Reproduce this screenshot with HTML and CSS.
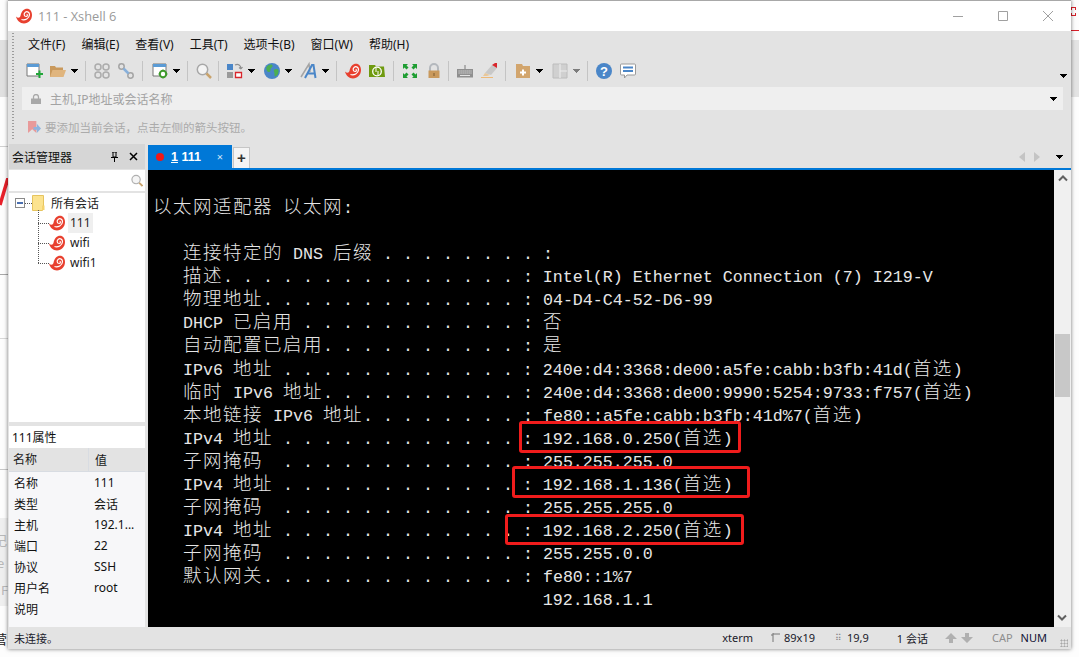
FILE: index.html
```html
<!DOCTYPE html>
<html lang="zh">
<head>
<meta charset="utf-8">
<title>111 - Xshell 6</title>
<link rel="stylesheet" href="styles.css">
</head>
<body>
<svg class="defs" width="0" height="0">
  <symbol id="snail" viewBox="0 0 16 16">
    <path d="M0 8.500C2 10.500 4 10 4.600 7.500 5.400 3.500 8 .8 11 .8 14 .8 16 3.400 16 7c0 5-3.600 8.400-8 8.400-4 0-7-2.800-8-6.900Z" fill="#e8402f"/>
    <path d="M5.500 11.500C9 12.500 13.300 10.500 13.500 6.800 13.600 4.300 11.200 3 9.300 4.200 7.400 5.500 8 8.500 10.200 8.500 11.500 8.400 11.800 6.800 10.700 6.300" fill="none" stroke="#fff" stroke-width="1.200"/>
  </symbol>
  <symbol id="caret" viewBox="0 0 7 16">
    <path d="M0 6h7v1H6v1H5v1H4v1H3V9H2V8H1V7H0Z" fill="#000"/>
  </symbol>
</svg>

<div class="desk">
  <i class="bg bg-band-l"></i><i class="bg bg-l2"></i><i class="bg bg-l3"></i><i class="bg bg-l4"></i><i class="bg bg-l5"></i>
  <i class="bg bg-band-b"></i><i class="bg bg-band-r"></i><i class="bg bg-r1"></i><i class="bg bg-r2"></i>
  <svg class="bg bg-slash" viewBox="0 0 8 32"><path d="M8 0 0 27" stroke="#e8202a" stroke-width="3.500" fill="none"/></svg>
  <span class="bg bg-t1">记</span><span class="bg bg-t2">e</span><span class="bg bg-t3">F</span><span class="bg bg-t4">营</span>

  <div class="win">
    <header class="title">
      <svg class="logo"><use href="#snail"/></svg>
      <span class="title-text">111 - Xshell 6</span>
      <span class="winbtns">
        <svg class="wb" viewBox="0 0 12 12"><path d="M1 6.500h10" stroke="#a0a0a0"/></svg>
        <svg class="wb" viewBox="0 0 12 12"><path d="M1.500 1.500h9v9h-9Z" stroke="#a0a0a0" fill="none"/></svg>
        <svg class="wb" viewBox="0 0 12 12"><path d="M1 1l10 10M11 1 1 11" stroke="#a0a0a0" fill="none"/></svg>
      </span>
    </header>

    <div class="chrome">
      <i class="grip"></i>
      <nav class="menu">
        <span>文件(F)</span><span>编辑(E)</span><span>查看(V)</span><span>工具(T)</span><span>选项卡(B)</span><span>窗口(W)</span><span>帮助(H)</span>
      </nav>
      <div class="tools">
        <svg class="ico" viewBox="0 0 16 16"><path d="M1 1h12v12H1Z" fill="#fff" stroke="#777"/><path d="M1 1h12v3H1Z" fill="#5b9bd5"/><path d="M10 10h2.500V7.500h2V10H17v2h-2.500v3h-2v-3H10Z" fill="#22a63a"/></svg>
        <svg class="ico" viewBox="0 0 16 16"><path d="M0 3h5l1 1.500h7V14H0Z" fill="#c9995c"/><path d="M2.500 7H16l-2.500 7H0Z" fill="#e0b57e"/></svg>
        <svg class="car"><use href="#caret"/></svg>
        <i class="sep"></i>
        <svg class="ico dim" viewBox="0 0 16 16"><g fill="none" stroke="#9a9a9a" stroke-width="1.500"><circle cx="4" cy="4" r="3"/><circle cx="12" cy="12" r="3"/><circle cx="12" cy="4" r="3"/><circle cx="4" cy="12" r="3"/></g></svg>
        <svg class="ico dim" viewBox="0 0 16 16"><circle cx="3.500" cy="3.500" r="2.700" fill="none" stroke="#909090" stroke-width="1.500"/><circle cx="12.500" cy="12.500" r="2.700" fill="none" stroke="#909090" stroke-width="1.500"/><path d="M5.500 5.500l5 5" stroke="#6a9fd8" stroke-width="2.500"/></svg>
        <i class="sep"></i>
        <svg class="ico m1" viewBox="0 0 16 16"><path d="M1 1h13v12H1Z" fill="#fff" stroke="#777"/><path d="M1 1h13v3H1Z" fill="#5b9bd5"/><circle cx="11" cy="11" r="3.200" fill="#fff" stroke="#3f9a2c" stroke-width="2"/><path d="M11 6.500v9M6.500 11h9" stroke="#3f9a2c" stroke-width="1" stroke-dasharray="1.500 6"/></svg>
        <svg class="car"><use href="#caret"/></svg>
        <i class="sep"></i>
        <svg class="ico" viewBox="0 0 16 16"><circle cx="6.500" cy="6.500" r="5.200" fill="#f4f4f4" stroke="#a8a8a8" stroke-width="1.500"/><path d="M10.500 10.500 15 15" stroke="#c9a36c" stroke-width="2.500"/></svg>
        <i class="sep tight"></i>
        <svg class="ico" viewBox="0 0 16 16"><path d="M0 1h6v6H0Z" fill="#4a86c8"/><path d="M0 9h6v6H0Z" fill="#9a9a9a"/><path d="M8.500 9.500h6v5h-6Z" fill="#fff" stroke="#d8262c" stroke-width="1.300"/><path d="M8 2c3-1.500 6 0 6 4M14 6l-2-1.500M14 6l1.500-2" fill="none" stroke="#909090" stroke-width="1.200"/></svg>
        <svg class="car wide"><use href="#caret"/></svg>
        <svg class="ico" viewBox="0 0 16 16"><circle cx="8" cy="8" r="8" fill="#4a86c8"/><path d="M2.500 4C5 1 8 1 8.500 2.500 9 4.500 6.500 4.500 6.500 6.500 7 8.500 5 10 3.500 8.500 2.500 7 2 5.500 2.500 4ZM10.500 6.500c2-1 4-.5 4 1.500.3 2.500-1.500 5-3 5.500-1.500-.5-1-2.500-1-3.500-.5-1.500-1.300-2.500 0-3.500Z" fill="#4caf50"/></svg>
        <svg class="car wide"><use href="#caret"/></svg>
        <span class="ico-a"><svg class="ico" viewBox="0 0 16 16"><path d="M0 14 8 1l1 8" fill="none" stroke="#a4a4a4" stroke-width="1.500"/><path d="M4 15 11 2h1.500l2 13M7 10.500h7" fill="none" stroke="#4a86c8" stroke-width="2"/></svg></span>
        <svg class="car"><use href="#caret"/></svg>
        <i class="sep"></i>
        <svg class="ico"><use href="#snail"/></svg>
        <svg class="ico" viewBox="0 0 16 16"><path d="M0 2h6l1 1.500h8L16 14H0Z" fill="#6f9a10"/><circle cx="8" cy="8.500" r="4.300" fill="none" stroke="#fff" stroke-width="1.300"/><path d="M7 5v7M9 5v7" stroke="#6f9a10"/><path d="M7 5v4M9 8v4" stroke="#fff"/></svg>
        <i class="sep"></i>
        <svg class="ico" viewBox="0 0 16 16"><g fill="#1f9e33"><path d="M1 1h5L4.500 2.500 6.500 4.500 4.500 6.500 2.500 4.500 1 6ZM15 1v5l-1.500-1.500-2 2-2-2 2-2L10 1ZM1 15v-5l1.500 1.500 2-2 2 2-2 2L6 15ZM15 15h-5l1.500-1.500-2-2 2-2 2 2L15 10Z"/></g></svg>
        <svg class="ico" viewBox="0 0 16 16"><path d="M4 8V5a4 4 0 0 1 8 0v3" fill="none" stroke="#b4b8bd" stroke-width="2"/><path d="M2.500 7.500h11V15h-11Z" fill="#c9995c"/><path d="M8 10v3" stroke="#96703f" stroke-width="1.500"/></svg>
        <i class="sep tight"></i>
        <svg class="ico" viewBox="0 0 16 16"><path d="M0 6h16v8.500H0Z" fill="#8f8f8f"/><path d="M8 6V2" stroke="#7a7a7a"/><path d="M1.500 8h13M1.500 10h13" stroke="#e3e3e3" stroke-dasharray="1.200 .8"/><path d="M3 12.500h10" stroke="#e3e3e3"/></svg>
        <svg class="ico" viewBox="0 0 16 16"><path d="M4 10 11 2l5 3-6 7Z" fill="#c8c8c8"/><path d="M11 2l3-2h2v5Z" fill="#d8262c"/><path d="M4 10l-2 3h4l3-1Z" fill="#e8c79a"/><path d="M0 14.500h12" stroke="#eeb976"/></svg>
        <i class="sep"></i>
        <svg class="ico m1" viewBox="0 0 16 16"><path d="M1 1h6l1 2h7v12H1Z" fill="#d2a56d"/><path d="M7 8.500h2v-2h2v2h2v2h-2v2H9v-2H7Z" fill="#fff" transform="translate(-2 0)"/></svg>
        <svg class="car"><use href="#caret"/></svg>
        <svg class="ico m2" viewBox="0 0 16 16"><path d="M1 1h14v14H1Z" fill="#d0d0d0" stroke="#bcbcbc"/><path d="M8 1v14M8 8h7" stroke="#ececec" stroke-width="1.200"/></svg>
        <svg class="car faint"><use href="#caret"/></svg>
        <i class="sep"></i>
        <svg class="ico" viewBox="0 0 16 16"><circle cx="8" cy="8" r="8" fill="#4a86c8"/><text x="8" y="12.500" class="qm">?</text></svg>
        <svg class="ico" viewBox="0 0 16 16"><path d="M1.500 1h13a1 1 0 0 1 1 1v9a1 1 0 0 1-1 1H7l-2.500 3v-3h-3a1 1 0 0 1-1-1V2a1 1 0 0 1 1-1Z" fill="#fff" stroke="#9a9a9a"/><path d="M3 4.500h10M3 8h10" stroke="#4a86c8" stroke-width="2"/></svg>
        <svg class="car end"><use href="#caret"/></svg>
      </div>
      <div class="addr">
        <svg class="lock" viewBox="0 0 10 10"><path d="M2.500 5V3a2.500 2.500 0 0 1 5 0v2" fill="none" stroke="#a8a8a8" stroke-width="1.300"/><path d="M0 4.500h10V10H0Z" fill="#a8a8a8"/></svg>
        <span class="addr-text">主机,IP地址或会话名称</span>
        <svg class="car addr-car"><use href="#caret"/></svg>
      </div>
      <div class="hint">
        <svg class="hint-ico" viewBox="0 0 14 14"><path d="M0 0h9v13L4.500 9 0 13Z" fill="#e89a9a"/><path d="M6 6.500h3.500V3L14 8l-4.500 5V9.500H6Z" fill="#8db4de"/></svg>
        <span>要添加当前会话，点击左侧的箭头按钮。</span>
      </div>
    </div>

    <div class="main">
      <aside class="side">
        <div class="side-head">
          <span>会话管理器</span>
          <svg class="pin" viewBox="0 0 9 10"><path d="M2 0h5M3 0v5h3V0M1 5.500h7M4.500 6v4" stroke="#000" fill="none"/></svg>
          <svg class="closex" viewBox="0 0 9 9"><path d="M1 1l7 7M8 1 1 8" stroke="#000" stroke-width="1.500"/></svg>
        </div>
        <div class="search">
          <svg class="search-ico" viewBox="0 0 13 13"><circle cx="5.500" cy="5.500" r="4.500" fill="#f5f5f5" stroke="#b0b0b0" stroke-width="1.300"/><path d="M9 9l3.500 3.500" stroke="#c9a36c" stroke-width="2"/></svg>
        </div>
        <div class="tree">
          <div class="root">
            <span class="minus"></span><i class="dots"></i>
            <svg class="folder" viewBox="0 0 13 16"><path d="M.5.500h11v13l-1 2H.5Z" fill="#fce38f" stroke="#e6c45e"/><path d="M10 10.500h2.500V15H10Z" fill="#f5d36d"/></svg>
            <span class="root-label">所有会话</span>
          </div>
          <div class="node"><i class="link"></i><svg class="node-ico"><use href="#snail"/></svg><span class="node-label sel">111</span></div>
          <div class="node"><i class="link"></i><svg class="node-ico"><use href="#snail"/></svg><span class="node-label">wifi</span></div>
          <div class="node last"><i class="link"></i><svg class="node-ico"><use href="#snail"/></svg><span class="node-label">wifi1</span></div>
        </div>
        <div class="props-title">111属性</div>
        <div class="props-head"><span class="k">名称</span><span class="v">值</span></div>
        <div class="props">
          <div class="row"><span class="k">名称</span><span class="v">111</span></div>
          <div class="row"><span class="k">类型</span><span class="v">会话</span></div>
          <div class="row"><span class="k">主机</span><span class="v">192.1...</span></div>
          <div class="row"><span class="k">端口</span><span class="v">22</span></div>
          <div class="row"><span class="k">协议</span><span class="v">SSH</span></div>
          <div class="row"><span class="k">用户名</span><span class="v">root</span></div>
          <div class="row"><span class="k">说明</span><span class="v"></span></div>
        </div>
      </aside>

      <section class="work">
        <div class="tabs">
          <div class="tab"><i class="dot"></i><span class="tab-label"><u>1</u> 111</span><span class="tab-x">×</span></div>
          <div class="plus">+</div>
          <span class="tab-nav">
            <svg class="nav" viewBox="0 0 6 10"><path d="M6 0v10L0 5Z" fill="#c4c4c4"/></svg>
            <svg class="nav" viewBox="0 0 6 10"><path d="M0 0v10l6-5Z" fill="#c4c4c4"/></svg>
          </span>
          <svg class="car tab-car"><use href="#caret"/></svg>
        </div>
        <div class="term-wrap">
<pre class="term"> 
<span class="zh">以太网适配器</span> <span class="zh">以太网</span>:

   <span class="zh">连接特定的</span> DNS <span class="zh">后缀</span> . . . . . . . . :
   <span class="zh">描述</span>. . . . . . . . . . . . . . . : Intel(R) Ethernet Connection (7) I219-V
   <span class="zh">物理地址</span>. . . . . . . . . . . . . : 04-D4-C4-52-D6-99
   DHCP <span class="zh">已启用</span> . . . . . . . . . . . : <span class="zh">否</span>
   <span class="zh">自动配置已启用</span>. . . . . . . . . . : <span class="zh">是</span>
   IPv6 <span class="zh">地址</span> . . . . . . . . . . . . : 240e:d4:3368:de00:a5fe:cabb:b3fb:41d(<span class="zh">首选</span>)
   <span class="zh">临时</span> IPv6 <span class="zh">地址</span>. . . . . . . . . . : 240e:d4:3368:de00:9990:5254:9733:f757(<span class="zh">首选</span>)
   <span class="zh">本地链接</span> IPv6 <span class="zh">地址</span>. . . . . . . . : fe80::a5fe:cabb:b3fb:41d%7(<span class="zh">首选</span>)
   IPv4 <span class="zh">地址</span> . . . . . . . . . . . . : 192.168.0.250(<span class="zh">首选</span>)
   <span class="zh">子网掩码</span>  . . . . . . . . . . . . : 255.255.255.0
   IPv4 <span class="zh">地址</span> . . . . . . . . . . . . : 192.168.1.136(<span class="zh">首选</span>)
   <span class="zh">子网掩码</span>  . . . . . . . . . . . . : 255.255.255.0
   IPv4 <span class="zh">地址</span> . . . . . . . . . . . . : 192.168.2.250(<span class="zh">首选</span>)
   <span class="zh">子网掩码</span>  . . . . . . . . . . . . : 255.255.0.0
   <span class="zh">默认网关</span>. . . . . . . . . . . . . : fe80::1%7
                                       192.168.1.1</pre>
          <div class="scroll">
            <svg class="sc" viewBox="0 0 10 8"><path d="M1 6.500 5 2.500l4 4" fill="none" stroke="#606060" stroke-width="2"/></svg>
            <i class="thumb"></i>
            <svg class="sc sc-down" viewBox="0 0 10 8"><path d="M1 1.500l4 4 4-4" fill="none" stroke="#606060" stroke-width="2"/></svg>
          </div>
        </div>
      </section>
    </div>

    <footer class="status">
      <span class="st-left">未连接。</span>
      <span class="st-xterm">xterm</span>
      <svg class="st-ico" viewBox="0 0 9 10"><path d="M2 0v9M0 2h2M7 1h2M2 1h5" stroke="#777" fill="none"/></svg>
      <span class="st-size">89x19</span>
      <span class="st-pos-ico">⠿</span>
      <span class="st-pos">19,9</span>
      <span class="st-sess">1 会话</span>
      <svg class="st-arrow st-up" viewBox="0 0 12 10"><path d="M6 0l6 6H8v4H4V6H0Z" fill="#b0b0b0"/></svg>
      <svg class="st-arrow" viewBox="0 0 12 10"><path d="M6 10 0 4h4V0h4v4h4Z" fill="#b0b0b0"/></svg>
      <span class="st-cap">CAP</span>
      <span class="st-num">NUM</span>
      <i class="st-grip"></i>
    </footer>
  </div>

  <i class="mark mark1"></i><i class="mark mark2"></i><i class="mark mark3"></i>
</div>
</body>
</html>
```

FILE: styles.css
```css
* { box-sizing: border-box; }
html, body { margin: 0; padding: 0; background: #fff; }
body { width: 1079px; height: 657px; overflow: hidden; font-family: "Noto Sans", "Noto Sans CJK SC", sans-serif; font-size: 12px; color: #1a1a1a; }
i { display: block; font-style: normal; }
.defs { position: absolute; }
.desk { position: relative; width: 1079px; height: 657px; background: #fdfdfd; overflow: hidden; }

/* desktop behind the window */
.bg { position: absolute; display: block; }
.bg-band-l { left: 0; top: 40px; width: 8px; height: 57px; background: #e0e0e0; }
.bg-l2 { left: 0; top: 146px; width: 8px; height: 1px; background: #d0d0d0; }
.bg-l3 { left: 0; top: 274px; width: 8px; height: 1px; background: #a8a8a8; }
.bg-l4 { left: 0; top: 338px; width: 8px; height: 1px; background: #d8d8d8; }
.bg-l5 { left: 0; top: 469px; width: 8px; height: 1px; background: #c8c8c8; }
.bg-band-b { left: 0; top: 518px; width: 8px; height: 88px; background: #efefef; }
.bg-band-r { left: 1071px; top: 40px; width: 8px; height: 57px; background: #e4e4e4; }
.bg-r1 { left: 1071px; top: 30px; width: 8px; height: 1px; background: #d8202a; }
.bg-r2 { left: 1071px; top: 7px; width: 5px; height: 9px; border: 1px dashed #d8202a; }
.bg-slash { left: 0; top: 178px; width: 8px; height: 32px; }
.bg-t1, .bg-t2, .bg-t3 { left: 0; color: #b8b8b8; font-size: 13px; line-height: 16px; }
.bg-t1 { top: 532px; left: -6px; }
.bg-t2 { top: 555px; left: -3px; }
.bg-t3 { top: 582px; left: 1px; }
.bg-t4 { left: -6px; top: 631px; color: #222; font-size: 13px; line-height: 16px; }

/* window */
.win { position: absolute; left: 8px; top: 0; width: 1063px; height: 649px; background: #e3e3e3; border-top: 1px solid #a8a8a8; display: flex; flex-direction: column; box-shadow: 0 0 4px rgba(0,0,0,.55); }
.title { height: 30px; background: #fff; display: flex; align-items: center; padding-left: 8px; flex: none; padding-bottom: 1px; }
.logo { width: 16px; height: 16px; }
.title-text { margin-left: 6px; font-size: 12.800px; color: #9a9a9a; font-family: "Open Sans", sans-serif; }
.winbtns { margin-left: auto; display: flex; margin-right: 17px; gap: 33px; }
.wb { width: 12px; height: 12px; display: block; }

.chrome { position: relative; flex: none; height: 113px; padding-left: 14px; }
.grip { position: absolute; left: 4px; top: 2px; width: 2px; height: 108px; background: repeating-linear-gradient(to bottom, #9c9c9c 0 1px, #e3e3e3 1px 3px); }
.menu { height: 26px; display: flex; align-items: center; gap: 16px; padding-left: 6px; font-size: 12px; color: #111; }
.tools { height: 30px; display: flex; align-items: center; padding-left: 4px; padding-bottom: 2px; }
.ico { width: 16px; height: 16px; flex: none; margin-right: 8px; display: block; overflow: visible; }
.ico-a { display: block; flex: none; height: 16px; }
.dim { opacity: .75; }
.m1 { margin-left: 1px; }
.m2 { margin-left: 2px; }
.car { width: 7px; height: 16px; flex: none; margin-left: -3px; margin-right: 7px; display: block; }
.wide { margin-right: 9px; }
.faint { opacity: .45; }
.end { margin-left: auto; margin-right: 4px; margin-top: 10px; }
.sep { width: 1px; height: 20px; background: #c4c4c4; margin-right: 8px; flex: none; }
.tight { margin-left: -2px; }
.qm { font-family: "Liberation Sans", sans-serif; font-size: 13px; font-weight: 700; fill: #fff; text-anchor: middle; }
.addr { height: 23px; margin-right: 8px; background: #efefef; display: flex; align-items: center; padding-left: 9px; color: #a3a3a3; width: 1041px; }
.lock { width: 10px; height: 10px; flex: none; }
.addr-text { margin-left: 9px; }
.addr-car { margin-left: auto; margin-right: 6px; }
.hint { height: 34px; display: flex; align-items: center; padding-left: 6px; color: #ababab; font-size: 11.500px; }
.hint-ico { width: 13px; height: 13px; flex: none; margin-right: 4px; }

.main { flex: 1; min-height: 0; display: flex; }
.side { width: 136px; margin-left: 1px; flex: none; background: #e3e3e3; display: flex; flex-direction: column; }
.side-head { height: 25px; flex: none; background: #d6d6d6; display: flex; align-items: center; padding-left: 3px; font-size: 12px; color: #111; }
.pin { width: 9px; height: 10px; margin-left: 38px; }
.closex { width: 9px; height: 9px; margin-left: 10px; }
.search { height: 21px; margin: 1px 0 2px; background: #fff; display: flex; align-items: center; justify-content: flex-end; padding-right: 2px; flex: none; }
.search-ico { width: 12px; height: 13px; }
.tree { height: 229px; flex: none; background: #fff; padding-top: 2px; margin-bottom: 4px; font-size: 12px; color: #222; }
.root { display: flex; align-items: center; height: 16px; padding-left: 6px; margin-bottom: 2px; }
.minus { width: 10px; height: 10px; border: 1px solid #8a8a8a; background: linear-gradient(#4a6fb0, #4a6fb0) center/6px 2px no-repeat #fff; flex: none; }
.dots { width: 7px; height: 1px; border-top: 1px dotted #555; flex: none; }
.folder { width: 13px; height: 16px; flex: none; }
.root-label { margin-left: 6px; }
.node { display: flex; align-items: center; height: 20px; padding-left: 29px; position: relative; }
.link { width: 11px; height: 10px; border-top: 1px dotted #555; margin-top: 10px; flex: none; }
.node::before { content: ""; position: absolute; left: 29px; top: -3px; height: 23px; border-left: 1px dotted #555; }
.node.last::before { height: 13px; }
.node-ico { width: 16px; height: 16px; flex: none; }
.node-label { margin-left: 3px; height: 20px; line-height: 20px; padding: 0 2px; }
.sel { background: #efefef; width: 25px; }
.props-title { height: 22px; flex: none; background: #fff; display: flex; align-items: center; padding-left: 3px; color: #111; }
.props-head { height: 24px; flex: none; background: #e3e3e3; display: flex; align-items: center; border-bottom: 1px solid #d8dce2; }
.props-head .k { width: 80px; padding-left: 4px; border-right: 1px solid #d8dce2; height: 23px; line-height: 23px; }
.props-head .v { padding-left: 6px; }
.props { flex: 1; background: #f7f7f9; }
.row { display: flex; height: 21px; align-items: center; padding-left: 5px; color: #111; }
.row .k { width: 80px; flex: none; }

.work { flex: 1; min-width: 0; margin-left: 3px; display: flex; flex-direction: column; }
.tabs { height: 24px; flex: none; display: flex; align-items: flex-end; }
.tab { width: 84px; height: 23px; background: #0078d7; color: #fff; display: flex; align-items: center; padding-left: 8px; font-weight: 700; font-size: 12px; }
.dot { width: 8px; height: 8px; border-radius: 50%; background: #f01818; flex: none; }
.tab-label { margin-left: 7px; font-family: "Liberation Sans", sans-serif; font-size: 12.500px; }
.tab-x { margin-left: auto; margin-right: 9px; font-weight: 400; font-size: 11px; color: #cfe6f8; }
.plus { width: 17px; height: 21px; margin-left: 1px; background: #f4f4f4; border: 1px solid #c6c6c6; border-bottom: 0; text-align: center; font-weight: 700; font-size: 15px; line-height: 19px; color: #333; font-family: "Liberation Sans", sans-serif; }
.tab-nav { margin-left: auto; display: flex; gap: 9px; align-self: center; margin-top: 1px; }
.nav { width: 6px; height: 10px; display: block; }
.tab-car { margin-left: 16px; margin-right: 8px; align-self: center; margin-top: 2px; }
.term-wrap { flex: 1; min-height: 0; border-top: 2px solid #0078d7; display: flex; }
.term { flex: 1; margin: 0; background: #000; color: #e6e6e6; padding: 4px 0 0 5px; font-family: "Liberation Mono", monospace; font-size: 16.670px; line-height: 23.060px; overflow: hidden; }
.zh { font-family: "Noto Sans CJK SC", sans-serif; font-size: 18.500px; letter-spacing: 1.500px; font-weight: 300; line-height: 0; }
.scroll { width: 17px; flex: none; background: #f0f0f0; position: relative; padding-top: 2px; }
.sc { display: block; width: 10px; height: 8px; margin: 2px auto 0; }
.thumb { position: absolute; left: 1px; top: 164px; width: 15px; height: 63px; background: #c8c8c8; }
.sc-down { position: absolute; left: 3px; bottom: 5px; margin: 0; }

.status { height: 22px; flex: none; display: flex; align-items: center; font-size: 11px; color: #1a1a2a; position: relative; padding-bottom: 1px; }
.st-left { margin-left: 6px; }
.st-xterm { margin-left: auto; }
.st-ico { width: 9px; height: 10px; margin-left: 18px; }
.st-size { margin-left: 4px; }
.st-pos-ico { margin-left: 20px; color: #888; font-size: 9px; width: 9px; }
.st-pos { margin-left: 3px; }
.st-sess { margin-left: 28px; }
.st-arrow { width: 12px; height: 10px; margin-left: 4px; }
.st-up { margin-left: 17px; }
.st-cap { margin-left: 19px; color: #8e8e8e; }
.st-num { margin-left: 8px; margin-right: 24px; color: #111133; }
.st-grip { position: absolute; right: 3px; bottom: 2px; width: 8px; height: 8px; background: radial-gradient(#a8a8a8 45%, transparent 50%) 0 0/3px 3px; }

/* annotation rectangles drawn over the screenshot */
.mark { position: absolute; border: 3px solid #f01c1c; border-radius: 3px; }
.mark1 { left: 519px; top: 421px; width: 222px; height: 32px; }
.mark2 { left: 512px; top: 466px; width: 238px; height: 32px; }
.mark3 { left: 505px; top: 514px; width: 239px; height: 31px; }
```
